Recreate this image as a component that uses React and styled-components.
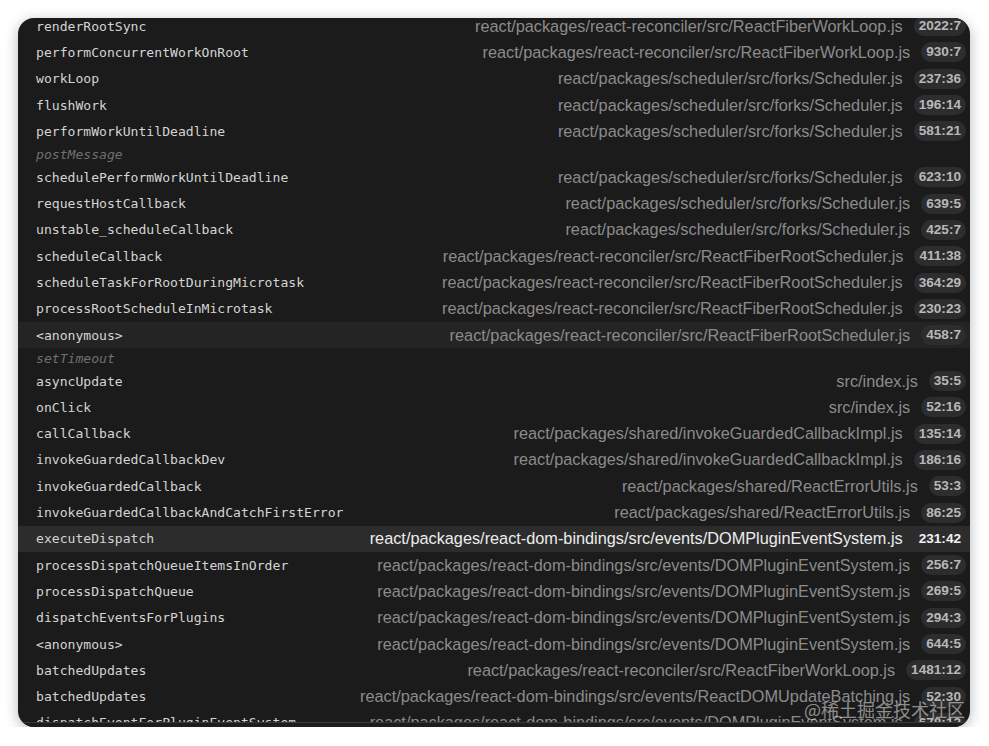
import styled, { createGlobalStyle } from 'styled-components'

const FIBER = 'react/packages/react-reconciler/src/ReactFiberWorkLoop.js'
const SCHED = 'react/packages/scheduler/src/forks/Scheduler.js'
const ROOT = 'react/packages/react-reconciler/src/ReactFiberRootScheduler.js'
const GUARD = 'react/packages/shared/invokeGuardedCallbackImpl.js'
const ERR = 'react/packages/shared/ReactErrorUtils.js'
const DOM = 'react/packages/react-dom-bindings/src/events/DOMPluginEventSystem.js'

const frames = [
  { name: 'renderRootSync', path: FIBER, loc: '2022:7' },
  { name: 'performConcurrentWorkOnRoot', path: FIBER, loc: '930:7' },
  { name: 'workLoop', path: SCHED, loc: '237:36' },
  { name: 'flushWork', path: SCHED, loc: '196:14' },
  { name: 'performWorkUntilDeadline', path: SCHED, loc: '581:21' },
  { async: 'postMessage' },
  { name: 'schedulePerformWorkUntilDeadline', path: SCHED, loc: '623:10' },
  { name: 'requestHostCallback', path: SCHED, loc: '639:5' },
  { name: 'unstable_scheduleCallback', path: SCHED, loc: '425:7' },
  { name: 'scheduleCallback', path: ROOT, loc: '411:38' },
  { name: 'scheduleTaskForRootDuringMicrotask', path: ROOT, loc: '364:29' },
  { name: 'processRootScheduleInMicrotask', path: ROOT, loc: '230:23' },
  { name: '<anonymous>', path: ROOT, loc: '458:7', hover: true },
  { async: 'setTimeout' },
  { name: 'asyncUpdate', path: 'src/index.js', loc: '35:5' },
  { name: 'onClick', path: 'src/index.js', loc: '52:16' },
  { name: 'callCallback', path: GUARD, loc: '135:14' },
  { name: 'invokeGuardedCallbackDev', path: GUARD, loc: '186:16' },
  { name: 'invokeGuardedCallback', path: ERR, loc: '53:3' },
  { name: 'invokeGuardedCallbackAndCatchFirstError', path: ERR, loc: '86:25' },
  { name: 'executeDispatch', path: DOM, loc: '231:42', selected: true },
  { name: 'processDispatchQueueItemsInOrder', path: DOM, loc: '256:7' },
  { name: 'processDispatchQueue', path: DOM, loc: '269:5' },
  { name: 'dispatchEventsForPlugins', path: DOM, loc: '294:3' },
  { name: '<anonymous>', path: DOM, loc: '644:5' },
  { name: 'batchedUpdates', path: FIBER, loc: '1481:12' },
  { name: 'batchedUpdates', path: 'react/packages/react-dom-bindings/src/events/ReactDOMUpdateBatching.js', loc: '52:30' },
  { name: 'dispatchEventForPluginEventSystem', path: DOM, loc: '678:12' },
]

export default function App() {
  return (
    <>
      <GlobalStyle />
      <Panel>
        <List>
          {frames.map((f, idx) =>
            f.async ? (
              <AsyncRow key={idx}>{f.async}</AsyncRow>
            ) : (
              <Row key={idx} $hover={f.hover} $selected={f.selected}>
                <Name>{f.name}</Name>
                <Path $selected={f.selected}>{f.path}</Path>
                <Loc $selected={f.selected}>{f.loc}</Loc>
              </Row>
            )
          )}
        </List>
        <Footer />
        <Watermark>@稀土掘金技术社区</Watermark>
      </Panel>
    </>
  )
}

const GlobalStyle = createGlobalStyle`
  html, body {
    margin: 0;
    background: #ffffff;
  }
  body {
    padding: 18px 19px 0 18px;
    font-family: "Liberation Sans", Arial, sans-serif;
  }
`

const Panel = styled.div`
  position: relative;
  width: 952px;
  height: 709px;
  display: flex;
  flex-direction: column;
  background: #1b1b1b;
  border-radius: 16px;
  overflow: hidden;
  box-shadow: 0 3px 14px rgba(0, 0, 0, 0.28);
`

const List = styled.div`
  flex: 1;
  overflow: hidden;
  border-bottom: 1px solid #3a3a3a;

  & > *:first-child {
    margin-top: -5px;
  }
`

const Footer = styled.div`
  height: 4px;
  background: #1d1d1d;
`

const Row = styled.div`
  display: flex;
  align-items: center;
  height: 26.3px;
  padding: 0 4px 0 18px;
  background: ${p => (p.$selected ? '#2c2c2d' : p.$hover ? '#242425' : 'transparent')};
`

const AsyncRow = styled.div`
  display: flex;
  align-items: center;
  height: 19.7px;
  padding-left: 18px;
  font-family: "DejaVu Sans Mono", monospace;
  font-size: 13.1px;
  font-style: italic;
  color: #6f6f6f;
`

const Name = styled.span`
  flex: 1;
  font-family: "DejaVu Sans Mono", monospace;
  font-size: 13.1px;
  color: #d4d4d4;
  white-space: nowrap;
`

const Path = styled.span`
  font-size: 16.3px;
  color: ${p => (p.$selected ? '#ececec' : '#8b8b8b')};
  white-space: nowrap;
`

const Loc = styled.span`
  margin-left: 11px;
  height: 20px;
  line-height: 20px;
  padding: 0 5px;
  border-radius: 10px;
  background: #2d2d2d;
  font-size: 13.6px;
  font-weight: 700;
  color: ${p => (p.$selected ? '#f2f2f2' : '#b8b8b8')};
`

const Watermark = styled.div`
  position: absolute;
  right: 5px;
  bottom: 5px;
  font-family: "Noto Sans CJK SC", sans-serif;
  font-size: 18px;
  color: rgba(255, 255, 255, 0.5);
  pointer-events: none;
`
